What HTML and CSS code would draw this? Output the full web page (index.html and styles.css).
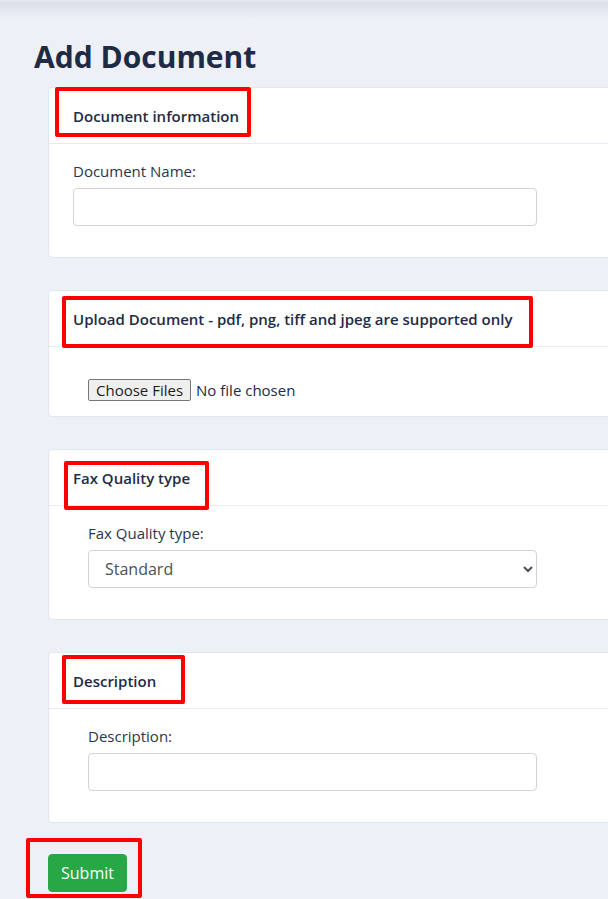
FILE: index.html
```html
<!DOCTYPE html>
<html lang="en">
<head>
<meta charset="utf-8">
<title>Add Document</title>
<link rel="stylesheet" href="styles.css">
</head>
<body>
<div class="page">
  <div class="topshade"></div>
  <main class="content">
    <h1 class="title">Add Document</h1>
    <div class="cards">
      <section class="card">
        <div class="card-header">Document information</div>
        <div class="card-body body-a">
          <label class="label" for="docname">Document Name:</label>
          <input class="control control-a" id="docname" type="text">
        </div>
      </section>
      <section class="card">
        <div class="card-header">Upload Document - pdf, png, tiff and jpeg are supported only</div>
        <div class="card-body body-file">
          <input class="file" type="file" multiple>
        </div>
      </section>
      <section class="card">
        <div class="card-header">Fax Quality type</div>
        <div class="card-body body-b">
          <label class="label" for="quality">Fax Quality type:</label>
          <select class="control control-b select" id="quality">
            <option>Standard</option>
            <option>Fine</option>
          </select>
        </div>
      </section>
      <section class="card">
        <div class="card-header">Description</div>
        <div class="card-body body-b">
          <label class="label" for="desc">Description:</label>
          <input class="control control-b" id="desc" type="text">
        </div>
      </section>
    </div>
    <button class="submit" type="button">Submit</button>
  </main>
  <div class="mark mark-1"></div>
  <div class="mark mark-2"></div>
  <div class="mark mark-3"></div>
  <div class="mark mark-4"></div>
  <div class="mark mark-5"></div>
</div>
</body>
</html>
```
FILE: styles.css
```css
html, body {
  margin: 0;
  padding: 0;
}
body {
  background: #edf0f7;
  font-family: "Open Sans", "Noto Sans", sans-serif;
  color: #212b45;
  overflow: hidden;
}
.page {
  position: relative;
  width: 608px;
  height: 899px;
  overflow: hidden;
}
.topshade {
  height: 20px;
  margin-bottom: -20px;
  background: linear-gradient(to bottom, #e6e9ef 0px, #dde0e8 3px, #e3e6ee 9px, #edf0f7 20px);
}
.content {
  padding: 39px 0 0 34px;
}
.title {
  margin: 0 0 12px 0;
  font-size: 30px;
  line-height: 36px;
  font-weight: 700;
  color: #1f2a44;
}
.cards {
  margin-left: 14px;
  width: 620px;
  display: flex;
  flex-direction: column;
  gap: 32px;
}
.card {
  background: #fff;
  border: 1px solid #e2e6ee;
  border-radius: 4px;
}
.card-header {
  padding: 17px 24px 16px 24px;
  line-height: 22px;
  font-size: 15px;
  font-weight: 600;
  color: #212b45;
  border-bottom: 1px solid #e8ebf2;
}
.card-body {
  display: flex;
  flex-direction: column;
  align-items: flex-start;
}
.body-a {
  padding: 16px 24px 31px 24px;
}
.body-b {
  padding: 16px 24px 31px 39px;
}
.body-file {
  padding: 32px 24px 15px 39px;
}
.label {
  font-size: 15px;
  line-height: 22px;
  color: #2a3550;
  margin-bottom: 6px;
}
.control {
  box-sizing: border-box;
  height: 38px;
  border: 1px solid #ced4da;
  border-radius: 4px;
  background: #fff;
  font-family: "Open Sans", "Noto Sans", sans-serif;
  font-size: 16px;
  color: #495057;
  padding: 6px 12px;
}
.control-a {
  width: 464px;
}
.control-b {
  width: 449px;
}
.select {
  padding-left: 12px;
}
.file {
  font-family: "Open Sans", "Noto Sans", sans-serif;
  font-size: 15px;
  color: #212b45;
}
.file::file-selector-button {
  font-family: "Open Sans", "Noto Sans", sans-serif;
  font-size: 15px;
  color: #1c1c1c;
  background: #efefef;
  border: 1px solid #767676;
  border-radius: 2px;
  padding: 0px 7px;
  margin-right: 5px;
}
.submit {
  margin: 31px 0 0 14px;
  height: 38px;
  padding: 6px 12px;
  background: #28a745;
  border: 1px solid #28a745;
  border-radius: 4px;
  color: #fff;
  font-family: "Open Sans", "Noto Sans", sans-serif;
  font-size: 16px;
  line-height: 24px;
}
.mark {
  position: absolute;
  box-sizing: border-box;
  border: 4px solid #ff0000;
  border-radius: 2px;
  pointer-events: none;
}
.mark-1 { left: 55px; top: 87px; width: 196px; height: 50px; }
.mark-2 { left: 62px; top: 296px; width: 471px; height: 52px; }
.mark-3 { left: 64px; top: 461px; width: 145px; height: 49px; }
.mark-4 { left: 62px; top: 655px; width: 123px; height: 49px; }
.mark-5 { left: 26px; top: 838px; width: 116px; height: 60px; }
```
